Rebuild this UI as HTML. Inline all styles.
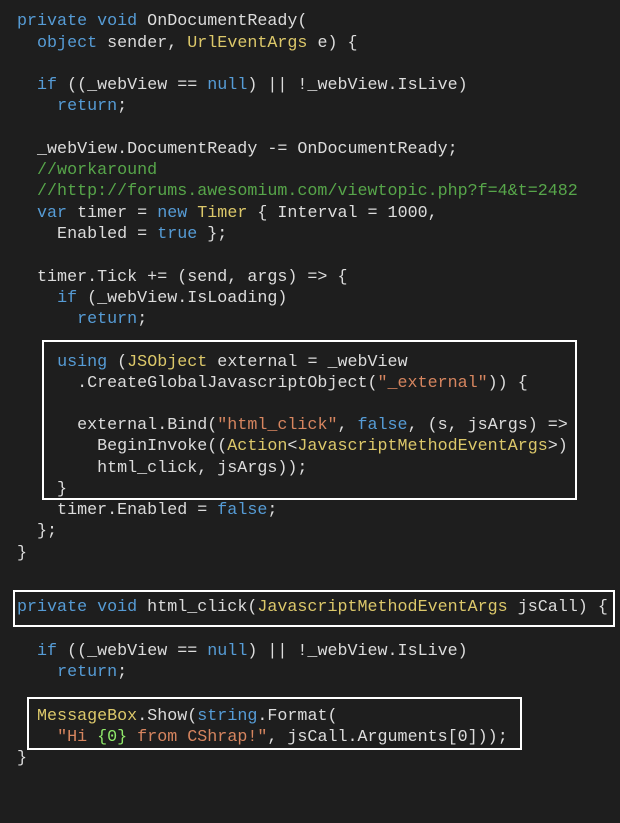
<!DOCTYPE html>
<html><head><meta charset="utf-8"><style>
html,body{margin:0;padding:0;background:#1e1e1e;}
body{width:620px;height:821px;position:relative;overflow:hidden;font-family:"Liberation Mono",monospace;font-size:16.7px;color:#dcdcdc;}
.w{position:absolute;left:0;top:1.5px;width:620px;height:821px;}
.l{position:absolute;height:21px;line-height:21px;white-space:pre;}
.k{color:#569cd6}.t{color:#dcc86a}.s{color:#d6855f}.c{color:#57a64a}.g{color:#8fe86a}
.b{position:absolute;border:2.5px solid #fff;box-sizing:border-box;}
</style></head><body>
<div class="b" style="left:42px;top:340px;width:535px;height:160px"></div>
<div class="b" style="left:13px;top:590px;width:602px;height:37px"></div>
<div class="b" style="left:27px;top:697px;width:495px;height:53px"></div>
<div class="w">
<div class="l" style="left:17px;top:9px"><span class="k">private void</span> OnDocumentReady(</div>
<div class="l" style="left:17px;top:31px">  <span class="k">object</span> sender, <span class="t">UrlEventArgs</span> e) {</div>
<div class="l" style="left:17px;top:73px">  <span class="k">if</span> ((_webView == <span class="k">null</span>) || !_webView.IsLive)</div>
<div class="l" style="left:17px;top:94px">    <span class="k">return</span>;</div>
<div class="l" style="left:17px;top:137px">  _webView.DocumentReady -= OnDocumentReady;</div>
<div class="l" style="left:17px;top:158px">  <span class="c">//workaround</span></div>
<div class="l" style="left:17px;top:179px">  <span class="c">//http://forums.awesomium.com/viewtopic.php?f=4&amp;t=2482</span></div>
<div class="l" style="left:17px;top:201px">  <span class="k">var</span> timer = <span class="k">new</span> <span class="t">Timer</span> { Interval = 1000,</div>
<div class="l" style="left:17px;top:222px">    Enabled = <span class="k">true</span> };</div>
<div class="l" style="left:17px;top:265px">  timer.Tick += (send, args) =&gt; {</div>
<div class="l" style="left:17px;top:286px">    <span class="k">if</span> (_webView.IsLoading)</div>
<div class="l" style="left:17px;top:307px">      <span class="k">return</span>;</div>
<div class="l" style="left:17px;top:350px">    <span class="k">using</span> (<span class="t">JSObject</span> external = _webView</div>
<div class="l" style="left:17px;top:371px">      .CreateGlobalJavascriptObject(<span class="s">"_external"</span>)) {</div>
<div class="l" style="left:17px;top:413px">      external.Bind(<span class="s">"html_click"</span>, <span class="k">false</span>, (s, jsArgs) =&gt;</div>
<div class="l" style="left:17px;top:434px">        BeginInvoke((<span class="t">Action</span>&lt;<span class="t">JavascriptMethodEventArgs</span>&gt;)</div>
<div class="l" style="left:17px;top:456px">        html_click, jsArgs));</div>
<div class="l" style="left:17px;top:477px">    }</div>
<div class="l" style="left:17px;top:498px">    timer.Enabled = <span class="k">false</span>;</div>
<div class="l" style="left:17px;top:519px">  };</div>
<div class="l" style="left:17px;top:541px">}</div>

<div class="l" style="left:17px;top:595px"><span class="k">private void</span> html_click(<span class="t">JavascriptMethodEventArgs</span> jsCall) {</div>
<div class="l" style="left:17px;top:639px">  <span class="k">if</span> ((_webView == <span class="k">null</span>) || !_webView.IsLive)</div>
<div class="l" style="left:17px;top:660px">    <span class="k">return</span>;</div>
<div class="l" style="left:17px;top:704px">  <span class="t">MessageBox</span>.Show(<span class="k">string</span>.Format(</div>
<div class="l" style="left:17px;top:725px">    <span class="s">"Hi </span><span class="g">{0}</span><span class="s"> from CShrap!"</span>, jsCall.Arguments[0]));</div>
<div class="l" style="left:17px;top:746px">}</div>
</div>
</body></html>
